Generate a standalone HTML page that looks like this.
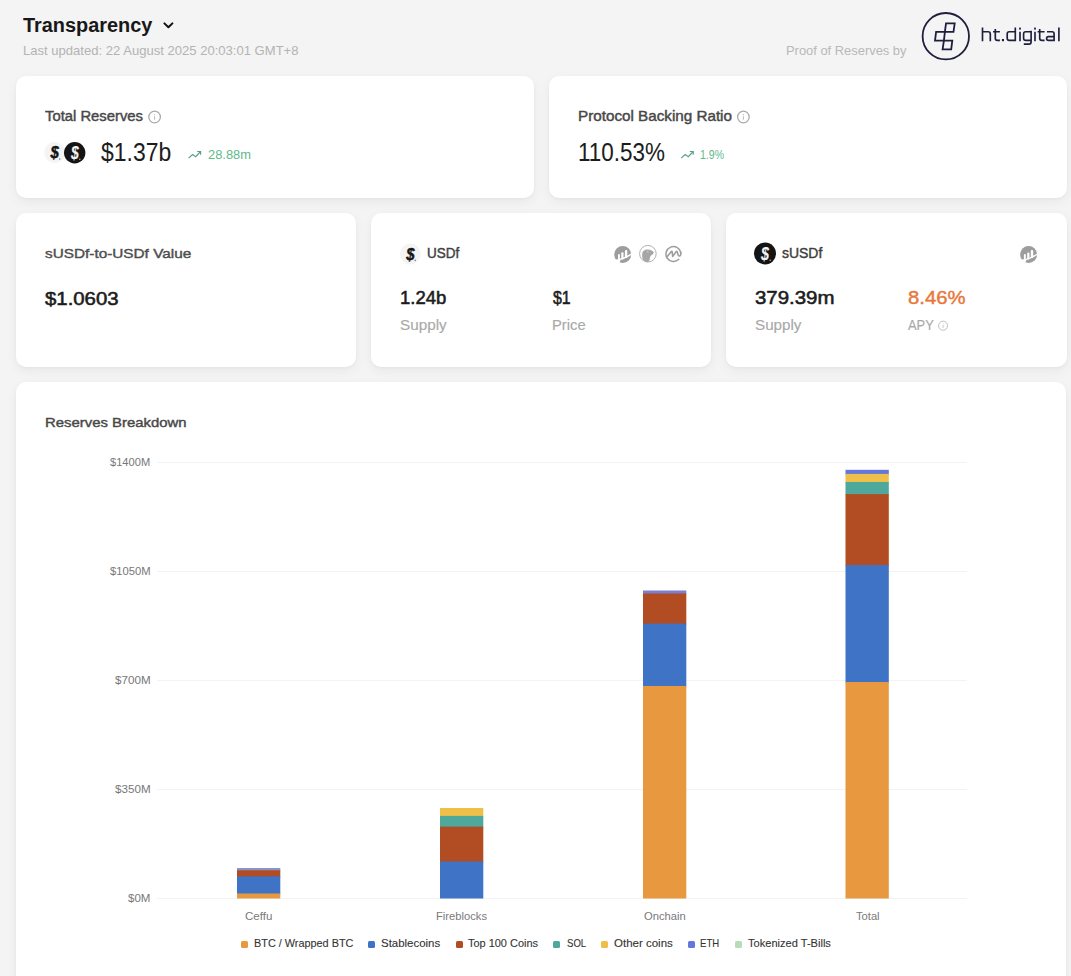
<!DOCTYPE html>
<html><head><meta charset="utf-8"><title>Transparency</title>
<style>
html,body{margin:0;padding:0;}
body{width:1071px;height:976px;overflow:hidden;background:#f4f4f4;position:relative;font-family:"Liberation Sans",sans-serif;}
.t{position:absolute;white-space:nowrap;}
.card{position:absolute;background:#fff;border-radius:10px;box-shadow:0 1px 3px rgba(0,0,0,0.035),0 4px 12px rgba(0,0,0,0.05);}
.sq{position:absolute;width:7px;height:7px;border-radius:1.5px;}
svg{position:absolute;left:0;top:0;}
</style></head><body>
<div class="card" style="left:16px;top:76px;width:517.5px;height:122px"></div>
<div class="card" style="left:548.5px;top:76px;width:518px;height:122px"></div>
<div class="card" style="left:16px;top:213px;width:340.3px;height:154.3px"></div>
<div class="card" style="left:371px;top:213px;width:340.3px;height:154.3px"></div>
<div class="card" style="left:726.2px;top:213px;width:340.5px;height:154.3px"></div>
<div class="card" style="left:16px;top:382px;width:1050px;height:640px"></div>
<svg width="1071" height="976" viewBox="0 0 1071 976">
<rect x="157" y="462.0" width="810" height="1" fill="#f3f3f3"/><rect x="157" y="571.0" width="810" height="1" fill="#f3f3f3"/><rect x="157" y="680.0" width="810" height="1" fill="#f3f3f3"/><rect x="157" y="789.0" width="810" height="1" fill="#f3f3f3"/><rect x="157" y="898.0" width="810" height="1" fill="#f3f3f3"/><rect x="237" y="868.0" width="43.3" height="3.20" fill="#8a94c8"/><rect x="237" y="870.3" width="43.3" height="6.90" fill="#b24c22"/><rect x="237" y="876.3" width="43.3" height="18.10" fill="#3e73c6"/><rect x="237" y="893.5" width="43.3" height="5.00" fill="#e8993f"/><rect x="440" y="808.0" width="43.3" height="8.80" fill="#eec04a"/><rect x="440" y="815.9" width="43.3" height="11.60" fill="#4ea89b"/><rect x="440" y="826.6" width="43.3" height="35.80" fill="#b24c22"/><rect x="440" y="861.5" width="43.3" height="37.00" fill="#3e73c6"/><rect x="643" y="590.5" width="43.3" height="3.90" fill="#7a7fd0"/><rect x="643" y="593.5" width="43.3" height="31.00" fill="#b24c22"/><rect x="643" y="623.6" width="43.3" height="63.30" fill="#3e73c6"/><rect x="643" y="686.0" width="43.3" height="212.50" fill="#e8993f"/><rect x="845.5" y="469.8" width="43.3" height="5.00" fill="#6577da"/><rect x="845.5" y="473.9" width="43.3" height="9.00" fill="#eec04a"/><rect x="845.5" y="482.0" width="43.3" height="13.00" fill="#4ea89b"/><rect x="845.5" y="494.1" width="43.3" height="71.80" fill="#b24c22"/><rect x="845.5" y="565.0" width="43.3" height="117.90" fill="#3e73c6"/><rect x="845.5" y="682.0" width="43.3" height="216.50" fill="#e8993f"/><polyline points="164.4,23.4 168.4,27.3 172.4,23.4" fill="none" stroke="#111" stroke-width="2" stroke-linecap="round" stroke-linejoin="round"/><circle cx="945.8" cy="36.2" r="23.2" fill="none" stroke="#1f1e3c" stroke-width="1.8"/><polygon points="946,23.4 954.7,23.4 953.5,31.8 944.9,31.8" fill="none" stroke="#1f1e3c" stroke-width="1.8" stroke-linejoin="miter"/><polygon points="936.1,31.8 944.9,31.8 943.9,40.6 935,40.6" fill="none" stroke="#1f1e3c" stroke-width="1.8" stroke-linejoin="miter"/><polygon points="943.9,40.6 952.3,40.6 951.2,49.4 942.6,49.4" fill="none" stroke="#1f1e3c" stroke-width="1.8" stroke-linejoin="miter"/><path d="M982.5,27.6V41.2M982.5,31.7H988.1Q990.3,31.7 990.3,33.9V41.2M995.3,29.0V38.2Q995.3,40.35 997.4,40.35H999.9M993.0,31.7H999.9M1015.3,27.6V41.2M1015.3,40.35H1009.3Q1007.2,40.35 1007.2,38.2V33.8Q1007.2,31.7 1009.3,31.7H1015.3M1020.0,31.7V41.2M1031.1,31.7H1025.7Q1023.6,31.7 1023.6,33.8V38.2Q1023.6,40.35 1025.7,40.35H1031.1M1031.1,30.849999999999998V42.0Q1031.1,44.1 1029.0,44.1H1023.8M1035.0,31.7V41.2M1039.7,29.0V38.2Q1039.7,40.35 1041.8,40.35H1044.6M1037.6,31.7H1044.6M1047.0,31.7H1052.0Q1054.1,31.7 1054.1,33.8V41.2M1054.1,40.35H1048.5Q1046.6,40.35 1046.6,38.5Q1046.6,36.6 1048.5,36.6H1054.1M1058.9,27.6V41.2" fill="none" stroke="#1f1e3c" stroke-width="1.65"/><rect x="1001.9" y="39.0" width="2.1" height="2.2" fill="#1f1e3c"/><rect x="1019.1" y="27.6" width="1.8" height="2.0" fill="#1f1e3c"/><rect x="1034.1" y="27.6" width="1.8" height="2.0" fill="#1f1e3c"/><circle cx="154.6" cy="117.0" r="5.8" fill="none" stroke="#aaaaaa" stroke-width="1.3"/><circle cx="154.6" cy="114.68" r="0.64" fill="#bbbbbb"/><rect x="154.08" y="116.30" width="1.04" height="3.36" fill="#bbbbbb"/><circle cx="743.4" cy="117.0" r="5.8" fill="none" stroke="#aaaaaa" stroke-width="1.3"/><circle cx="743.4" cy="114.68" r="0.64" fill="#bbbbbb"/><rect x="742.88" y="116.30" width="1.04" height="3.36" fill="#bbbbbb"/><circle cx="943.1" cy="325.7" r="4.5" fill="none" stroke="#b8b8b8" stroke-width="0.9"/><circle cx="943.1" cy="323.90" r="0.49" fill="#b8b8b8"/><rect x="942.70" y="325.16" width="0.81" height="2.61" fill="#b8b8b8"/><polyline points="188.6,158.2 192.6,154.5 195.7,156.7 200.6,151.5" fill="none" stroke="#5a9f82" stroke-width="1.15" stroke-linejoin="miter"/><polyline points="197.2,151.5 200.6,151.5 200.6,154.79999999999998" fill="none" stroke="#5a9f82" stroke-width="1.15"/><polyline points="681.2,158.2 685.2,154.5 688.3000000000001,156.7 693.2,151.5" fill="none" stroke="#5a9f82" stroke-width="1.15" stroke-linejoin="miter"/><polyline points="689.8000000000001,151.5 693.2,151.5 693.2,154.79999999999998" fill="none" stroke="#5a9f82" stroke-width="1.15"/><circle cx="54.7" cy="152.6" r="10.5" fill="#f4f4f4"/><g transform="translate(54.80,158.39) scale(0.88,1)"><text x="0" y="0" font-family="Liberation Sans" font-weight="700" font-style="italic" font-size="17.17" fill="#141414" stroke="#141414" stroke-width="0.48" text-anchor="middle">$</text></g><circle cx="59.70" cy="159.08" r="0.8" fill="#a08080"/><circle cx="74.7" cy="152.7" r="10.7" fill="#141414"/><g transform="translate(74.80,158.60) scale(0.8,1)"><text x="0" y="0" font-family="Liberation Sans" font-weight="700" font-style="italic" font-size="17.50" fill="#f2f2f2" stroke="#f2f2f2" stroke-width="0.13" text-anchor="middle">$</text></g><circle cx="79.80" cy="159.30" r="0.8" fill="#b0b0b0"/><circle cx="410.3" cy="254.0" r="10.4" fill="#f4f4f4"/><g transform="translate(410.40,259.73) scale(0.88,1)"><text x="0" y="0" font-family="Liberation Sans" font-weight="700" font-style="italic" font-size="17.01" fill="#141414" stroke="#141414" stroke-width="0.48" text-anchor="middle">$</text></g><circle cx="415.26" cy="260.41" r="0.8" fill="#a08080"/><circle cx="765" cy="253.5" r="11" fill="#141414"/><g transform="translate(765.10,259.57) scale(0.8,1)"><text x="0" y="0" font-family="Liberation Sans" font-weight="700" font-style="italic" font-size="17.99" fill="#f2f2f2" stroke="#f2f2f2" stroke-width="0.13" text-anchor="middle">$</text></g><circle cx="770.24" cy="260.29" r="0.8" fill="#b0b0b0"/><g transform="translate(613.7,245.4)"><circle cx="9" cy="9" r="8.5" fill="#9d9d9d"/><path d="M0.5,15.0 Q9.5,14.6 18.6,8.0" fill="none" stroke="#fff" stroke-width="1.5"/><path d="M0,14.6 L6.8,14.6 L5.2,18.6 L0,18.6 Z" fill="#fff"/><rect x="4.3" y="8.5" width="1.9" height="6.0" rx="0.9" fill="#fff"/><rect x="7.6" y="6.9" width="2.2" height="7.2" rx="1.0" fill="#fff"/><rect x="11.2" y="4.6" width="2.4" height="8.0" rx="1.1" fill="#fff"/></g><g transform="translate(638.9,244.7)"><circle cx="9" cy="9" r="8.3" fill="none" stroke="#b2b2b2" stroke-width="1.0"/><path d="M3.3,9.1 C3.4,6.6 5.6,4.8 8.9,4.8 C11.6,4.8 14.0,6.2 15.0,7.8 C14.6,9.0 13.8,9.8 12.4,10.6 C11.0,11.6 11.0,13.6 10.7,15.4 C10.4,16.4 9.6,17.2 8.7,17.6 C6.6,17.2 4.6,15.8 3.7,14.1 C3.3,12.6 3.2,10.6 3.3,9.1 Z" fill="#a6a6a6"/><circle cx="8.8" cy="7.0" r="1.1" fill="#bdbdbd"/></g><g transform="translate(664.2,244.7)"><path d="M14.6,14.6 A7.5,7.5 0 1 1 16.6,7.8" fill="none" stroke="#9d9d9d" stroke-width="1.5" stroke-linecap="round"/><path d="M3.0,11.9 L7.1,6.9 Q7.7,6.2 8.0,7.2 L8.5,11.7 L12.0,6.9 Q12.6,6.3 12.9,7.1 L14.0,10.4 Q14.8,11.8 16.0,10.9 Q16.8,10.1 16.7,7.8" fill="none" stroke="#9d9d9d" stroke-width="1.6" stroke-linejoin="round" stroke-linecap="round"/></g><g transform="translate(1019.5999999999999,245.5)"><circle cx="9" cy="9" r="8.5" fill="#9d9d9d"/><path d="M0.5,15.0 Q9.5,14.6 18.6,8.0" fill="none" stroke="#fff" stroke-width="1.5"/><path d="M0,14.6 L6.8,14.6 L5.2,18.6 L0,18.6 Z" fill="#fff"/><rect x="4.3" y="8.5" width="1.9" height="6.0" rx="0.9" fill="#fff"/><rect x="7.6" y="6.9" width="2.2" height="7.2" rx="1.0" fill="#fff"/><rect x="11.2" y="4.6" width="2.4" height="8.0" rx="1.1" fill="#fff"/></g>
</svg>
<div class="t" style="left:23.20px;top:14.87px;font-size:20px;line-height:20px;font-weight:700;color:#181818;transform:scaleX(0.9941);transform-origin:0 0;">Transparency</div>
<div class="t" style="left:23.20px;top:44.00px;font-size:13px;line-height:13px;font-weight:400;color:#b3b3b3;transform:scaleX(1.0044);transform-origin:0 0;">Last updated: 22 August 2025 20:03:01 GMT+8</div>
<div class="t" style="left:786.30px;top:44.00px;font-size:13px;line-height:13px;font-weight:400;color:#b8b8b8;transform:scaleX(0.9927);transform-origin:0 0;">Proof of Reserves by</div>
<div class="t" style="left:44.90px;top:109.52px;font-size:13.8px;line-height:13.8px;font-weight:400;color:#484848;transform:scaleX(1.0737);transform-origin:0 0;-webkit-text-stroke:0.42px #484848;">Total Reserves</div>
<div class="t" style="left:101.00px;top:139.64px;font-size:25px;line-height:25px;font-weight:400;color:#1c1c1c;transform:scaleX(0.9181);transform-origin:0 0;-webkit-text-stroke:0.05px #1c1c1c;">$1.37b</div>
<div class="t" style="left:207.60px;top:148.62px;font-size:12.5px;line-height:12.5px;font-weight:400;color:#5fb98b;transform:scaleX(1.0314);transform-origin:0 0;">28.88m</div>
<div class="t" style="left:577.50px;top:109.52px;font-size:13.8px;line-height:13.8px;font-weight:400;color:#484848;transform:scaleX(1.1031);transform-origin:0 0;-webkit-text-stroke:0.42px #484848;">Protocol Backing Ratio</div>
<div class="t" style="left:578.00px;top:139.64px;font-size:25px;line-height:25px;font-weight:400;color:#1c1c1c;transform:scaleX(0.8984);transform-origin:0 0;-webkit-text-stroke:0.05px #1c1c1c;">110.53%</div>
<div class="t" style="left:700.40px;top:148.62px;font-size:12.5px;line-height:12.5px;font-weight:400;color:#5fb98b;transform:scaleX(0.8424);transform-origin:0 0;">1.9%</div>
<div class="t" style="left:44.90px;top:246.57px;font-size:13.5px;line-height:13.5px;font-weight:400;color:#4e4e4e;transform:scaleX(1.1352);transform-origin:0 0;-webkit-text-stroke:0.42px #4e4e4e;">sUSDf-to-USDf Value</div>
<div class="t" style="left:45.00px;top:290.19px;font-size:18.2px;line-height:18.2px;font-weight:400;color:#1c1c1c;transform:scaleX(1.1188);transform-origin:0 0;-webkit-text-stroke:0.55px #1c1c1c;">$1.0603</div>
<div class="t" style="left:427.00px;top:246.15px;font-size:14px;line-height:14px;font-weight:400;color:#404040;transform:scaleX(0.9627);transform-origin:0 0;-webkit-text-stroke:0.42px #404040;">USDf</div>
<div class="t" style="left:400.20px;top:289.73px;font-size:17.8px;line-height:17.8px;font-weight:400;color:#1c1c1c;transform:scaleX(1.0395);transform-origin:0 0;-webkit-text-stroke:0.55px #1c1c1c;">1.24b</div>
<div class="t" style="left:552.70px;top:289.73px;font-size:17.8px;line-height:17.8px;font-weight:400;color:#1c1c1c;transform:scaleX(0.8940);transform-origin:0 0;-webkit-text-stroke:0.55px #1c1c1c;">$1</div>
<div class="t" style="left:400.20px;top:318.18px;font-size:14.2px;line-height:14.2px;font-weight:400;color:#a9a9a9;transform:scaleX(1.0756);transform-origin:0 0;-webkit-text-stroke:0.15px #a9a9a9;">Supply</div>
<div class="t" style="left:552.40px;top:318.18px;font-size:14.2px;line-height:14.2px;font-weight:400;color:#a9a9a9;transform:scaleX(1.0386);transform-origin:0 0;-webkit-text-stroke:0.15px #a9a9a9;">Price</div>
<div class="t" style="left:782.00px;top:246.45px;font-size:14px;line-height:14px;font-weight:400;color:#404040;transform:scaleX(0.9963);transform-origin:0 0;-webkit-text-stroke:0.42px #404040;">sUSDf</div>
<div class="t" style="left:755.10px;top:289.85px;font-size:17.9px;line-height:17.9px;font-weight:400;color:#1c1c1c;transform:scaleX(1.1412);transform-origin:0 0;-webkit-text-stroke:0.55px #1c1c1c;">379.39m</div>
<div class="t" style="left:908.10px;top:289.85px;font-size:17.9px;line-height:17.9px;font-weight:400;color:#e8773b;transform:scaleX(1.1349);transform-origin:0 0;-webkit-text-stroke:0.4px #e8773b;">8.46%</div>
<div class="t" style="left:755.00px;top:318.18px;font-size:14.2px;line-height:14.2px;font-weight:400;color:#a9a9a9;transform:scaleX(1.0710);transform-origin:0 0;-webkit-text-stroke:0.15px #a9a9a9;">Supply</div>
<div class="t" style="left:907.80px;top:318.18px;font-size:14.2px;line-height:14.2px;font-weight:400;color:#a9a9a9;transform:scaleX(0.9080);transform-origin:0 0;-webkit-text-stroke:0.15px #a9a9a9;">APY</div>
<div class="t" style="left:44.70px;top:416.27px;font-size:13.5px;line-height:13.5px;font-weight:400;color:#484848;transform:scaleX(1.1028);transform-origin:0 0;-webkit-text-stroke:0.42px #484848;">Reserves Breakdown</div>
<div class="t" style="left:110.20px;top:456.61px;font-size:11.8px;line-height:11.8px;font-weight:400;color:#777777;transform:scaleX(0.9427);transform-origin:0 0;">$1400M</div>
<div class="t" style="left:109.80px;top:565.61px;font-size:11.8px;line-height:11.8px;font-weight:400;color:#777777;transform:scaleX(0.9521);transform-origin:0 0;">$1050M</div>
<div class="t" style="left:114.80px;top:674.61px;font-size:11.8px;line-height:11.8px;font-weight:400;color:#777777;transform:scaleX(0.9867);transform-origin:0 0;">$700M</div>
<div class="t" style="left:114.80px;top:783.61px;font-size:11.8px;line-height:11.8px;font-weight:400;color:#777777;transform:scaleX(0.9867);transform-origin:0 0;">$350M</div>
<div class="t" style="left:128.00px;top:892.61px;font-size:11.8px;line-height:11.8px;font-weight:400;color:#777777;transform:scaleX(0.9758);transform-origin:0 0;">$0M</div>
<div class="t" style="left:245.40px;top:911.33px;font-size:11.3px;line-height:11.3px;font-weight:400;color:#7a7a7a;transform:scaleX(1.0222);transform-origin:0 0;">Ceffu</div>
<div class="t" style="left:436.20px;top:911.33px;font-size:11.3px;line-height:11.3px;font-weight:400;color:#7a7a7a;transform:scaleX(0.9905);transform-origin:0 0;">Fireblocks</div>
<div class="t" style="left:644.10px;top:911.33px;font-size:11.3px;line-height:11.3px;font-weight:400;color:#7a7a7a;transform:scaleX(0.9932);transform-origin:0 0;">Onchain</div>
<div class="t" style="left:856.20px;top:911.33px;font-size:11.3px;line-height:11.3px;font-weight:400;color:#7a7a7a;transform:scaleX(0.9887);transform-origin:0 0;">Total</div>

<div class="sq" style="left:241.2px;top:941.2px;background:#e8993f"></div><div class="t" style="left:253.90px;top:938.23px;font-size:11.3px;line-height:11.3px;font-weight:400;color:#333333;transform:scaleX(0.9613);transform-origin:0 0;-webkit-text-stroke:0.1px #333333;">BTC / Wrapped BTC</div>
<div class="sq" style="left:368.4px;top:941.2px;background:#3e73c6"></div><div class="t" style="left:381.10px;top:938.23px;font-size:11.3px;line-height:11.3px;font-weight:400;color:#333333;transform:scaleX(1.0134);transform-origin:0 0;-webkit-text-stroke:0.1px #333333;">Stablecoins</div>
<div class="sq" style="left:455.6px;top:941.2px;background:#b24c22"></div><div class="t" style="left:468.30px;top:938.23px;font-size:11.3px;line-height:11.3px;font-weight:400;color:#333333;transform:scaleX(0.9690);transform-origin:0 0;-webkit-text-stroke:0.1px #333333;">Top 100 Coins</div>
<div class="sq" style="left:553.4px;top:941.2px;background:#4ea89b"></div><div class="t" style="left:566.50px;top:938.23px;font-size:11.3px;line-height:11.3px;font-weight:400;color:#333333;transform:scaleX(0.8491);transform-origin:0 0;-webkit-text-stroke:0.1px #333333;">SOL</div>
<div class="sq" style="left:601.0px;top:941.2px;background:#eec04a"></div><div class="t" style="left:614.10px;top:938.23px;font-size:11.3px;line-height:11.3px;font-weight:400;color:#333333;transform:scaleX(1.0176);transform-origin:0 0;-webkit-text-stroke:0.1px #333333;">Other coins</div>
<div class="sq" style="left:687.9px;top:941.2px;background:#6577da"></div><div class="t" style="left:700.40px;top:938.23px;font-size:11.3px;line-height:11.3px;font-weight:400;color:#333333;transform:scaleX(0.8496);transform-origin:0 0;-webkit-text-stroke:0.1px #333333;">ETH</div>
<div class="sq" style="left:734.9px;top:941.2px;background:#b8dcb6"></div><div class="t" style="left:748.00px;top:938.23px;font-size:11.3px;line-height:11.3px;font-weight:400;color:#333333;transform:scaleX(0.9802);transform-origin:0 0;-webkit-text-stroke:0.1px #333333;">Tokenized T-Bills</div>

</body></html>
